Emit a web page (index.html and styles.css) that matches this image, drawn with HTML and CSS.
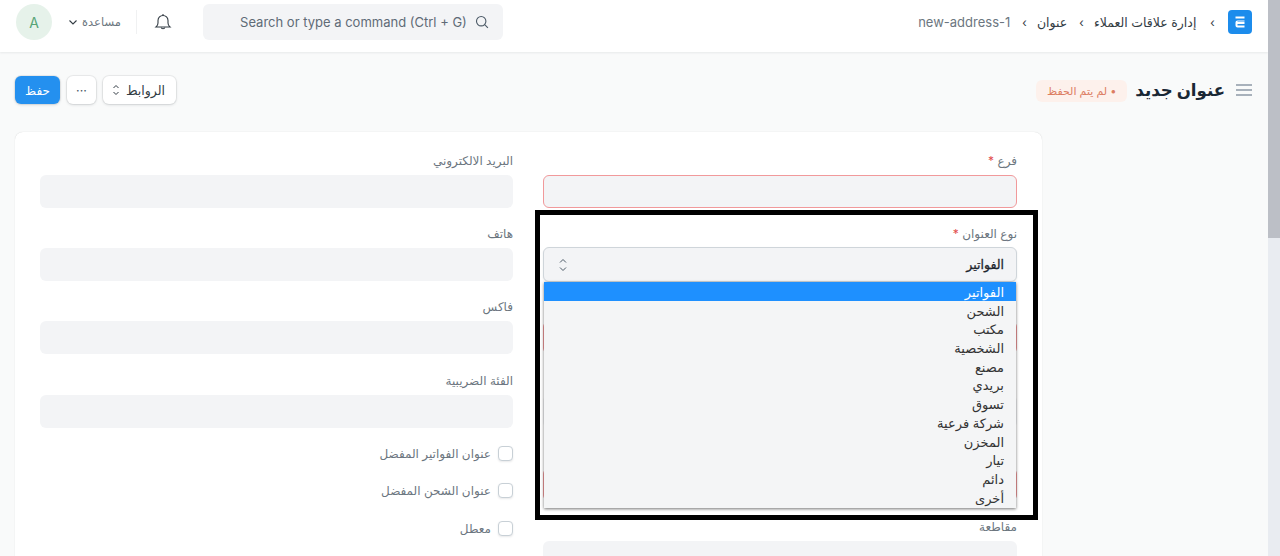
FILE: index.html
```html
<!DOCTYPE html>
<html lang="ar" dir="rtl">
<head>
    <meta charset="UTF-8">
    <meta name="viewport" content="width=device-width, initial-scale=1.0">
    <title>عنوان جديد</title>
    <link rel="stylesheet" href="styles.css">
</head>
<body>
    <div class="window">
        <div class="scrollbar"><div class="scrollThumb"></div></div>
        <div class="page">
            <header class="navbar">
                <svg class="logo" width="24" height="24" viewBox="0 0 24 24">
                    <rect width="24" height="24" rx="4" fill="#1c8cec"/>
                    <path d="M7.500 6.500h9v2h-9z" fill="#fff"/>
                    <path d="M16.500 10.500H9.500a2 2 0 0 0-2 2v3a2 2 0 0 0 2 2h7v-2h-7v-1.500h7v-2h-7v-.5h7z" fill="#fff"/>
                </svg>
                <nav class="crumbs">
                    <span class="crumbSep crumbSepFirst">‹</span>
                    <span class="crumb">إدارة علاقات العملاء</span>
                    <span class="crumbSep crumbSepTight">‹</span>
                    <span class="crumb">عنوان</span>
                    <span class="crumbSep crumbSepTight">‹</span>
                    <span class="crumb crumbLast">new-address-1</span>
                </nav>
                <div class="navTools">
                    <div class="search">
                        <svg width="14" height="14" viewBox="0 0 14 14" fill="none" stroke="#4c5a67" stroke-width="1.1">
                            <circle cx="6.2" cy="6.2" r="4.7"/>
                            <path d="M9.7 9.7l3.2 3.2"/>
                        </svg>
                        <span class="searchText">Search or type a command (Ctrl + G)</span>
                    </div>
                    <svg class="bell" width="18" height="18" viewBox="0 0 18 18" fill="none" stroke="#333c44" stroke-width="1.1">
                        <path d="M2 14h14c-1.200-1-2-2.200-2-4V7.500a5 5 0 0 0-10 0V10c0 1.800-.8 3-2 4z"/>
                        <path d="M7.200 14.500c.2 1.700 3.400 1.700 3.600 0"/>
                        <path d="M9 1v1.500"/>
                    </svg>
                    <div class="navDivider"></div>
                    <div class="help">
                        <span>مساعدة</span>
                        <svg width="10" height="10" viewBox="0 0 10 10" fill="none" stroke="#333c44" stroke-width="1.1">
                            <path d="M1.500 3.500L5 7l3.500-3.500"/>
                        </svg>
                    </div>
                    <div class="avatar">A</div>
                </div>
            </header>

            <div class="pageHead">
                <div class="titleArea">
                    <svg width="16" height="12" viewBox="0 0 16 12" stroke="#8d99a6" stroke-width="1.500">
                        <path d="M0 1h16M0 6h16M0 11h16"/>
                    </svg>
                    <h1 class="title">عنوان جديد</h1>
                    <span class="badge">• لم يتم الحفظ</span>
                </div>
                <div class="actions">
                    <div class="btn btnLinks">
                        <span>الروابط</span>
                        <svg width="8" height="12" viewBox="0 0 8 12" fill="none" stroke="#333c44" stroke-width="1">
                            <path d="M1.500 4L4 1.500 6.500 4M1.500 8L4 10.500 6.500 8"/>
                        </svg>
                    </div>
                    <div class="btn btnMore">···</div>
                    <div class="btn btnPrimary">حفظ</div>
                </div>
            </div>

            <main class="card">
                <div class="formCol">
                    <div class="field">
                        <label class="fieldLabel">فرع <span class="req">*</span></label>
                        <div class="input inputError"></div>
                    </div>
                    <div class="field">
                        <label class="fieldLabel">نوع العنوان <span class="req">*</span></label>
                        <div class="input selectBox">
                            <span>الفواتير</span>
                            <svg width="8" height="16" viewBox="0 0 8 16" fill="none" stroke="#4c5a67" stroke-width="1">
                                <path d="M1 5.500L4 2.500l3 3M1 10.500l3 3 3-3"/>
                            </svg>
                        </div>
                    </div>
                    <div class="field">
                        <label class="fieldLabel"></label>
                        <div class="input inputError"></div>
                    </div>
                    <div class="field">
                        <label class="fieldLabel"></label>
                        <div class="input"></div>
                    </div>
                    <div class="field">
                        <label class="fieldLabel"></label>
                        <div class="input inputError"></div>
                    </div>
                    <div class="field">
                        <label class="fieldLabel">مقاطعة</label>
                        <div class="input"></div>
                    </div>
                </div>
                <div class="formCol">
                    <div class="field">
                        <label class="fieldLabel">البريد الالكتروني</label>
                        <div class="input"></div>
                    </div>
                    <div class="field">
                        <label class="fieldLabel">هاتف</label>
                        <div class="input"></div>
                    </div>
                    <div class="field">
                        <label class="fieldLabel">فاكس</label>
                        <div class="input"></div>
                    </div>
                    <div class="field fieldLast">
                        <label class="fieldLabel">الفئة الضريبية</label>
                        <div class="input"></div>
                    </div>
                    <div class="checkRow"><span class="checkBox"></span>عنوان الفواتير المفضل</div>
                    <div class="checkRow"><span class="checkBox"></span>عنوان الشحن المفضل</div>
                    <div class="checkRow"><span class="checkBox"></span>معطل</div>
                </div>
            </main>

            <ul class="dropList">
                <li class="dropItem dropActive">الفواتير</li>
                <li class="dropItem">الشحن</li>
                <li class="dropItem">مكتب</li>
                <li class="dropItem">الشخصية</li>
                <li class="dropItem">مصنع</li>
                <li class="dropItem">بريدي</li>
                <li class="dropItem">تسوق</li>
                <li class="dropItem">شركة فرعية</li>
                <li class="dropItem">المخزن</li>
                <li class="dropItem">تيار</li>
                <li class="dropItem">دائم</li>
                <li class="dropItem">أخرى</li>
            </ul>
            <div class="highlightBox"></div>
        </div>
    </div>
</body>
</html>
```

FILE: styles.css
```css
* {
    box-sizing: border-box;
}

html, body {
    height: 100%;
}

body {
    margin: 0;
    overflow: hidden;
    background-color: #f9fafa;
    color: #333c44;
    font-family: Inter, "DejaVu Sans", sans-serif;
    font-size: 13px;
}

.window {
    display: flex;
    height: 100%;
}

.scrollbar {
    flex: 0 0 12px;
    background-color: #e9ecf1;
}

.scrollThumb {
    height: 238px;
    background-color: #bcbfc6;
}

.page {
    position: relative;
    flex: 1;
    min-width: 0;
    overflow: hidden;
}

.navbar {
    display: flex;
    align-items: center;
    height: 52px;
    padding: 0 16px 8px;
    background-color: #fff;
    box-shadow: 0 1px 2px rgba(25, 39, 52, 0.08);
}

.logo {
    flex: none;
}

.crumbs {
    display: flex;
    align-items: center;
    margin-right: 13px;
    font-size: 13px;
}

.crumb {
    color: #333c44;
    font-size: 12.5px;
}

.crumbLast {
    color: #6c7680;
    direction: ltr;
    font-size: 13px;
}

.crumbSep {
    margin: 0 12px;
    color: #333c44;
    font-size: 12px;
    transform: scaleX(-1);
}

.crumbSepFirst {
    margin: 0 0 0 14px;
}

.crumbSepTight {
    margin-right: 10px;
}

.navTools {
    display: flex;
    align-items: center;
    margin-right: auto;
}

.search {
    display: flex;
    align-items: center;
    width: 300px;
    height: 36px;
    padding: 0 14px;
    background-color: #f3f4f6;
    border-radius: 6px;
    color: #5f6b76;
}

.searchText {
    margin-right: 8px;
    direction: ltr;
    white-space: nowrap;
}

.bell {
    margin-right: 31px;
}

.navDivider {
    width: 1px;
    height: 24px;
    margin: 0 17px 0 15px;
    background-color: #f0f1f2;
}

.help {
    display: flex;
    align-items: center;
    gap: 4px;
    color: #6c7680;
    font-size: 11.5px;
}

.avatar {
    display: flex;
    align-items: center;
    justify-content: center;
    width: 36px;
    height: 36px;
    margin-right: 16px;
    border-radius: 50%;
    background-color: #e6f2ea;
    color: #57a577;
    font-size: 14px;
}

.pageHead {
    display: flex;
    align-items: center;
    justify-content: space-between;
    height: 80px;
    padding: 0 16px 4px 15px;
}

.titleArea {
    display: flex;
    align-items: center;
}

.title {
    margin: 0 11px 0 8px;
    color: #192734;
    font-size: 16.6px;
    font-weight: 700;
}

.badge {
    height: 22px;
    margin-top: 1px;
    padding: 0 11px;
    background-color: #fdf1ec;
    border-radius: 6px;
    color: #dc7d62;
    font-size: 11px;
    line-height: 22px;
}

.actions {
    display: flex;
    align-items: center;
    gap: 7px;
}

.btn {
    display: flex;
    align-items: center;
    height: 28px;
    background-color: #fff;
    border-radius: 6px;
    box-shadow: 0 0 0 1px rgba(0, 0, 0, 0.05), 0 1px 3px rgba(25, 39, 52, 0.15);
    font-size: 12.5px;
}

.btnLinks {
    gap: 6px;
    padding: 0 11px 0 9px;
}

.btnMore {
    width: 29px;
    justify-content: center;
    color: #4c5a67;
}

.btnPrimary {
    width: 45px;
    justify-content: center;
    background-color: #2490ef;
    color: #fff;
    font-size: 12px;
}

.card {
    display: grid;
    grid-template-columns: 474px 473px;
    column-gap: 30px;
    width: 1027px;
    margin-right: 226px;
    padding: 20px 25px 0 25px;
    background-color: #fff;
    border-radius: 8px;
    box-shadow: 0 0 1px rgba(0, 0, 0, 0.2);
}

.formCol {
    min-width: 0;
}

.field {
    height: 73.2px;
}

.fieldLast {
    height: 63px;
}

.fieldLabel {
    display: block;
    height: 23px;
    color: #6c7680;
    font-size: 12px;
    line-height: 18px;
}

.req {
    color: #e24c4c;
}

.input {
    height: 33px;
    background-color: #f3f4f6;
    border-radius: 6px;
}

.inputError {
    border: 1px solid #f1999b;
}

.selectBox {
    display: flex;
    align-items: center;
    justify-content: space-between;
    height: 35px;
    margin-top: -1px;
    padding: 0 12px 0 15px;
    border: 1px solid #cfd5da;
    box-shadow: 0 1px 2px rgba(25, 39, 52, 0.1);
    font-size: 12.5px;
    color: #1f272e;
    -webkit-text-stroke: 0.3px #1f272e;
}

.checkRow {
    display: flex;
    align-items: center;
    gap: 7px;
    height: 37.5px;
    color: #6c7680;
    font-size: 12px;
}

.checkBox {
    width: 15px;
    height: 15px;
    background-color: #fff;
    border: 1px solid #c8d0d6;
    border-radius: 4px;
    box-shadow: 0 1px 2px rgba(25, 39, 52, 0.1);
}

.dropList {
    position: absolute;
    top: 282px;
    left: 544px;
    width: 472px;
    height: 226px;
    margin: 0;
    padding: 0;
    list-style-type: none;
    background-color: #f4f5f6;
    box-shadow: 0 1px 3px rgba(0, 0, 0, 0.55);
    font-size: 13px;
}

.dropItem {
    height: 18.7px;
    padding: 0 12px;
    line-height: 20px;
    color: #333;
}

.dropActive {
    background-color: #1e90ff;
    color: #fff;
}

.highlightBox {
    position: absolute;
    top: 210px;
    left: 535px;
    width: 503px;
    height: 310px;
    border: 5px solid #000;
    pointer-events: none;
}
```
